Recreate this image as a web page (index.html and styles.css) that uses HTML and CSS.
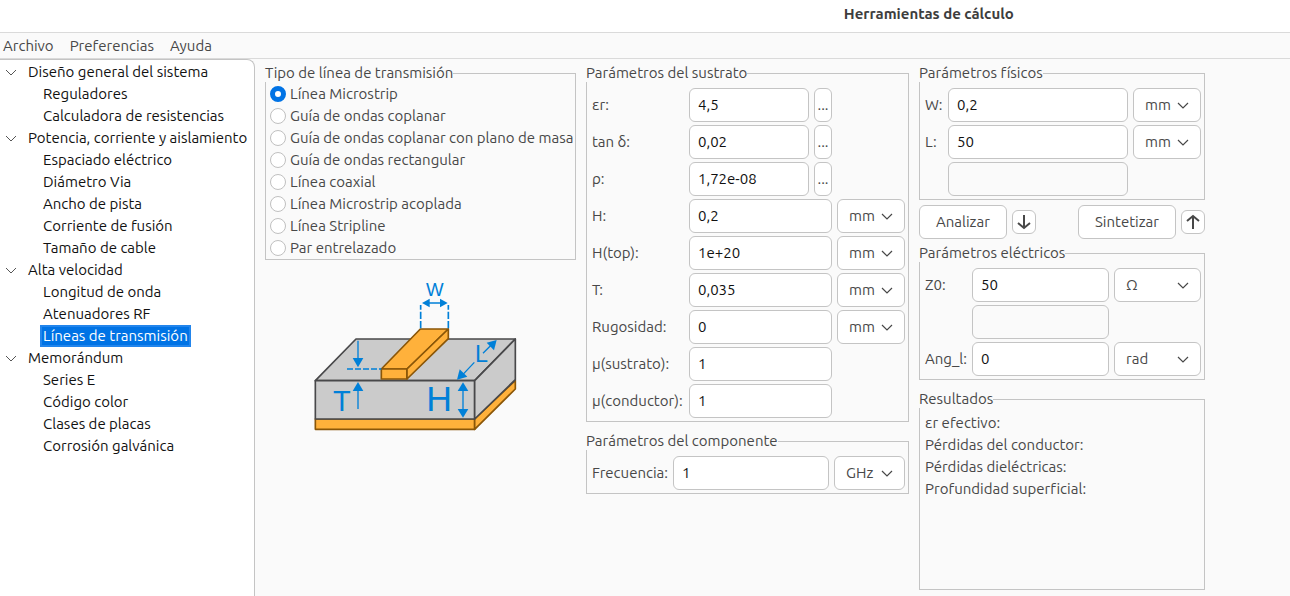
FILE: index.html
```html
<!DOCTYPE html>
<html lang="es">
<head>
<meta charset="utf-8">
<title>Herramientas de cálculo</title>
<link rel="stylesheet" href="styles.css">
</head>
<body>
<header class="titlebar"><h1>Herramientas de cálculo</h1></header>
<nav class="menubar">
  <button type="button">Archivo</button>
  <button type="button">Preferencias</button>
  <button type="button">Ayuda</button>
</nav>
<div class="body">
  <aside class="tree">
    <details open>
      <summary><svg class="chev" viewBox="0 0 12 12"><path d="M1 4l5 5 5-5"/></svg>Diseño general del sistema</summary>
      <a href="#">Reguladores</a>
      <a href="#">Calculadora de resistencias</a>
    </details>
    <details open>
      <summary><svg class="chev" viewBox="0 0 12 12"><path d="M1 4l5 5 5-5"/></svg>Potencia, corriente y aislamiento</summary>
      <a href="#">Espaciado eléctrico</a>
      <a href="#">Diámetro Via</a>
      <a href="#">Ancho de pista</a>
      <a href="#">Corriente de fusión</a>
      <a href="#">Tamaño de cable</a>
    </details>
    <details open>
      <summary><svg class="chev" viewBox="0 0 12 12"><path d="M1 4l5 5 5-5"/></svg>Alta velocidad</summary>
      <a href="#">Longitud de onda</a>
      <a href="#">Atenuadores RF</a>
      <a href="#" class="selected" aria-current="page">Líneas de transmisión</a>
    </details>
    <details open>
      <summary><svg class="chev" viewBox="0 0 12 12"><path d="M1 4l5 5 5-5"/></svg>Memorándum</summary>
      <a href="#">Series E</a>
      <a href="#">Código color</a>
      <a href="#">Clases de placas</a>
      <a href="#">Corrosión galvánica</a>
    </details>
  </aside>

  <main class="panel">
    <section class="column">
      <fieldset class="group types">
        <legend>Tipo de línea de transmisión</legend>
        <label><input type="radio" name="line" checked>Línea Microstrip</label>
        <label><input type="radio" name="line">Guía de ondas coplanar</label>
        <label><input type="radio" name="line">Guía de ondas coplanar con plano de masa</label>
        <label><input type="radio" name="line">Guía de ondas rectangular</label>
        <label><input type="radio" name="line">Línea coaxial</label>
        <label><input type="radio" name="line">Línea Microstrip acoplada</label>
        <label><input type="radio" name="line">Línea Stripline</label>
        <label><input type="radio" name="line">Par entrelazado</label>
      </fieldset>
      <svg class="diagram" viewBox="40 30 648 462" role="img" aria-label="Línea Microstrip">
        <g stroke-width="5" stroke-linejoin="round">
          <g fill="#ffb13b" stroke="#8a5608">
            <path d="M47 447H525V478H47Z"/>
            <path d="M525 447L647 331V357L525 478Z"/>
          </g>
          <g fill="#cbcbcb" stroke="#48484a">
            <path d="M47 332L169 207H647L525 332Z"/>
            <path d="M47 332H525V447H47Z"/>
            <path d="M525 332L647 207V329L525 447Z"/>
          </g>
          <g fill="#ffb13b" stroke="#8a5608">
            <path d="M245 297L362 177H446L322 297Z"/>
            <path d="M245 297H322V327H245Z"/>
            <path d="M322 297L446 177V206L322 327Z"/>
          </g>
        </g>
        <g stroke="#0080d8" stroke-width="4" fill="none">
          <path d="M363 175V105M446 175V105" stroke-width="5" stroke-dasharray="22 6"/>
          <path d="M142 297H245" stroke-width="5" stroke-dasharray="18 6"/>
          <path d="M380 99H430M175 212V270M175 417V355M490 355V428M490 313L524 277M550 250L574 226"/>
        </g>
        <g fill="#0080d8">
          <path d="M367 99L390 86V112Z"/>
          <path d="M444 99L421 86V112Z"/>
          <path d="M175 292L159 264H191Z"/>
          <path d="M175 336L159 363H191Z"/>
          <path d="M490 337L474 363H506Z"/>
          <path d="M490 443L474 417H506Z"/>
          <path d="M472 329L480 298L503 320Z"/>
          <path d="M591 210L561 218L583 241Z"/>
          <text x="379" y="78" font-size="56">W</text>
          <text x="526" y="276" font-size="70">L</text>
          <text x="380" y="423" font-size="107">H</text>
          <text x="100" y="423" font-size="87">T</text>
        </g>
      </svg>
    </section>

    <section class="column">
      <fieldset class="group substrate">
        <legend>Parámetros del sustrato</legend>
        <label for="er">εr:</label><div class="pair"><input id="er" type="text" value="4,5"><button type="button" class="more">...</button></div>
        <label for="tand">tan δ:</label><div class="pair"><input id="tand" type="text" value="0,02"><button type="button" class="more">...</button></div>
        <label for="rho">ρ:</label><div class="pair"><input id="rho" type="text" value="1,72e-08"><button type="button" class="more">...</button></div>
        <label for="h">H:</label><input id="h" type="text" value="0,2"><select aria-label="Unidad de H"><option>mm</option></select>
        <label for="ht">H(top):</label><input id="ht" type="text" value="1e+20"><select aria-label="Unidad de H(top)"><option>mm</option></select>
        <label for="t">T:</label><input id="t" type="text" value="0,035"><select aria-label="Unidad de T"><option>mm</option></select>
        <label for="rug">Rugosidad:</label><input id="rug" type="text" value="0"><select aria-label="Unidad de rugosidad"><option>mm</option></select>
        <label for="mus">μ(sustrato):</label><input id="mus" type="text" value="1">
        <label for="muc">μ(conductor):</label><input id="muc" type="text" value="1">
      </fieldset>
      <fieldset class="group component">
        <legend>Parámetros del componente</legend>
        <label for="freq">Frecuencia:</label><input id="freq" type="text" value="1"><select aria-label="Unidad de frecuencia"><option>GHz</option></select>
      </fieldset>
    </section>

    <section class="column">
      <fieldset class="group physical">
        <legend>Parámetros físicos</legend>
        <label for="w">W:</label><input id="w" type="text" value="0,2"><select aria-label="Unidad de W"><option>mm</option></select>
        <label for="l">L:</label><input id="l" type="text" value="50"><select aria-label="Unidad de L"><option>mm</option></select>
        <label for="p3"></label><input id="p3" type="text" disabled>
      </fieldset>
      <div class="actions">
        <button type="button" class="push">Analizar</button>
        <button type="button" class="arrow" aria-label="Analizar hacia abajo"><svg viewBox="0 0 16 16"><path d="M8 1V14M2 9L8 14L14 9"/></svg></button>
        <button type="button" class="push synth">Sintetizar</button>
        <button type="button" class="arrow" aria-label="Sintetizar hacia arriba"><svg viewBox="0 0 16 16"><path d="M8 15V2M2 7L8 2L14 7"/></svg></button>
      </div>
      <fieldset class="group electrical">
        <legend>Parámetros eléctricos</legend>
        <label for="z0">Z0:</label><input id="z0" type="text" value="50"><select aria-label="Unidad de Z0"><option>Ω</option></select>
        <label for="e2"></label><input id="e2" type="text" disabled>
        <label for="ang">Ang_l:</label><input id="ang" type="text" value="0"><select aria-label="Unidad de Ang_l"><option>rad</option></select>
      </fieldset>
      <fieldset class="group results">
        <legend>Resultados</legend>
        <p>εr efectivo:</p>
        <p>Pérdidas del conductor:</p>
        <p>Pérdidas dieléctricas:</p>
        <p>Profundidad superficial:</p>
      </fieldset>
    </section>
  </main>
</div>
</body>
</html>
```
FILE: styles.css
```css
* {
  box-sizing: border-box;
}

body {
  margin: 0;
  min-height: 100vh;
  display: flex;
  flex-direction: column;
  background: #fafafa;
  color: #484848;
  font: 15px/22px "Ubuntu", "Noto Sans", sans-serif;
  font-variant-ligatures: none;
}

button,
input,
select {
  margin: 0;
  font: inherit;
  color: inherit;
}

.titlebar {
  height: 33px;
  padding-left: 44%;
  background: #fff;
  border-bottom: 1px solid #dadada;
}

.titlebar h1 {
  margin: 0;
  padding-top: 3px;
  font-size: 15px;
  text-align: center;
  color: #3d3d3d;
}

.menubar {
  display: flex;
  gap: 16px;
  height: 26px;
  padding: 2px 3px;
  border-bottom: 1px solid #dadada;
}

.menubar button {
  padding: 0;
  border: 0;
  background: none;
}

.body {
  flex: 1;
  display: flex;
}

.tree {
  flex: 0 0 255px;
  padding-top: 1px;
  background: #fff;
  border: 1px solid #c4c4c4;
  border-width: 1px 1px 0 0;
  border-radius: 0 8px 0 0;
  color: #111;
  white-space: nowrap;
}

.tree summary {
  display: flex;
  align-items: center;
  gap: 11px;
  padding-left: 5px;
  list-style: none;
}

.chev {
  width: 12px;
  height: 12px;
  fill: none;
  stroke: #555;
}

.tree a {
  display: block;
  width: max-content;
  height: 22px;
  margin-left: 40px;
  padding: 0 3px;
  color: inherit;
  text-decoration: none;
}

.tree .selected {
  background: #0073e5;
  box-shadow: inset 0 0 0 2px #2285ec;
  color: #fff;
}

.panel {
  flex: 1;
  display: grid;
  grid-template-columns: minmax(0, 311px) minmax(0, 323px) minmax(0, 286px);
  gap: 10px;
  padding: 5px 10px 6px;
}

.column {
  display: flex;
  flex-direction: column;
  gap: 10px;
}

.group {
  display: grid;
  align-items: center;
  gap: 3px 5px;
  min-width: 0;
  margin: 0;
  padding: 6px 3px 3px 5px;
  border: 1px solid #c4c4c4;
}

legend {
  margin-left: -6px;
  padding: 0;
  line-height: 18px;
  background: #fafafa;
}

.types {
  display: block;
  padding: 1px 4px 0;
}

.types legend {
  margin-left: -5px;
}

.types label {
  display: flex;
  align-items: center;
  gap: 4px;
  white-space: nowrap;
}

.types input {
  appearance: none;
  flex: none;
  width: 16px;
  height: 16px;
  border: 1px solid #c0c0c0;
  border-radius: 50%;
  background: #fff;
}

.types input:checked {
  border: 5px solid #0073e5;
}

.diagram {
  align-self: center;
  width: 216px;
  margin-top: 10px;
  font-family: "Liberation Sans", sans-serif;
}

.substrate {
  grid-template-columns: 92px 1fr 68px;
}

.component {
  grid-template-columns: 76px 1fr 71px;
}

.physical {
  grid-template-columns: 18px 1fr 68px;
}

.electrical {
  grid-template-columns: 42px 1fr 87px;
}

.group > label {
  grid-column: 1;
  white-space: nowrap;
}

.pair {
  display: flex;
  gap: 5px;
}

input[type="text"],
select,
.more,
.push,
.arrow {
  height: 34px;
  border: 1px solid #c4c4c4;
  border-radius: 6px;
  background-color: #fff;
}

input[type="text"] {
  width: 100%;
  min-width: 0;
  padding: 0 8px 2px;
  color: #111;
}

input[type="text"]:disabled {
  background: #fafafa;
}

select {
  appearance: none;
  width: 100%;
  padding: 0 11px;
  background-image: url("data:image/svg+xml,%3Csvg xmlns='http://www.w3.org/2000/svg' width='12' height='12' fill='none' stroke='%23484848' stroke-width='1.2'%3E%3Cpath d='M1 4l5 5 5-5'/%3E%3C/svg%3E");
  background-repeat: no-repeat;
  background-position: right 11px center;
}

.more {
  flex: 0 0 18px;
  padding: 0;
}

.actions {
  display: flex;
  align-items: center;
  gap: 5px;
  margin: -5px 0;
}

.push {
  padding: 0 16px;
}

.synth {
  margin-left: auto;
}

.actions .arrow {
  display: grid;
  place-items: center;
  width: 24px;
  height: 24px;
  padding: 0;
}

.arrow svg {
  width: 16px;
  height: 16px;
  fill: none;
  stroke: #484848;
  stroke-width: 2;
}

.results {
  flex: 1;
  display: block;
  padding-top: 4px;
}

.results p {
  margin: 0;
}
```
